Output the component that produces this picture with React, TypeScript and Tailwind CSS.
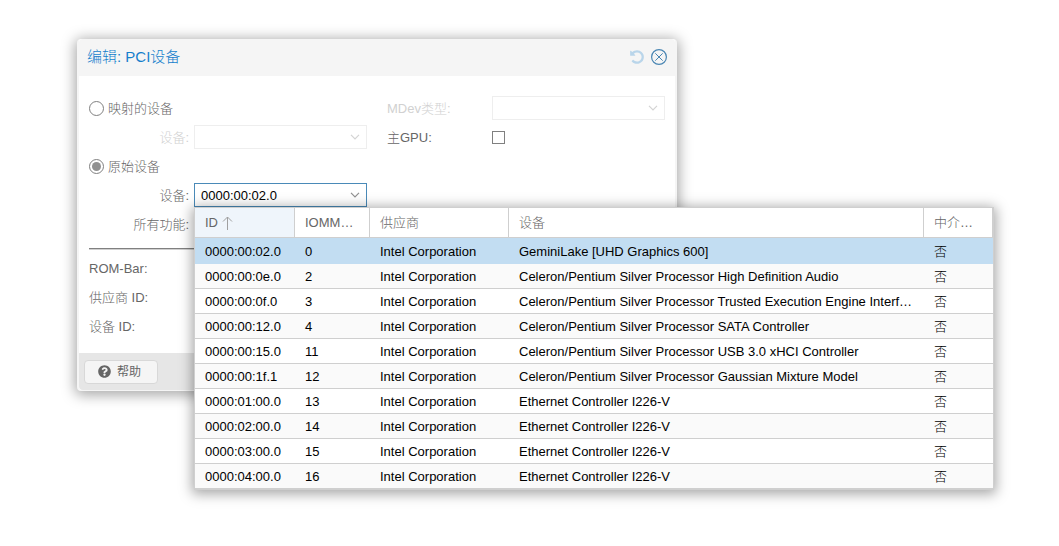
import { ReactNode, useState } from "react";
import { FaQuestionCircle } from "react-icons/fa";

const devices = [
    { id: "0000:00:02.0", group: 0, vendor: "Intel Corporation", name: "GeminiLake [UHD Graphics 600]" },
    { id: "0000:00:0e.0", group: 2, vendor: "Intel Corporation", name: "Celeron/Pentium Silver Processor High Definition Audio" },
    { id: "0000:00:0f.0", group: 3, vendor: "Intel Corporation", name: "Celeron/Pentium Silver Processor Trusted Execution Engine Interface" },
    { id: "0000:00:12.0", group: 4, vendor: "Intel Corporation", name: "Celeron/Pentium Silver Processor SATA Controller" },
    { id: "0000:00:15.0", group: 11, vendor: "Intel Corporation", name: "Celeron/Pentium Silver Processor USB 3.0 xHCI Controller" },
    { id: "0000:00:1f.1", group: 12, vendor: "Intel Corporation", name: "Celeron/Pentium Silver Processor Gaussian Mixture Model" },
    { id: "0000:01:00.0", group: 13, vendor: "Intel Corporation", name: "Ethernet Controller I226-V" },
    { id: "0000:02:00.0", group: 14, vendor: "Intel Corporation", name: "Ethernet Controller I226-V" },
    { id: "0000:03:00.0", group: 15, vendor: "Intel Corporation", name: "Ethernet Controller I226-V" },
    { id: "0000:04:00.0", group: 16, vendor: "Intel Corporation", name: "Ethernet Controller I226-V" },
];

const UndoIcon = () => (
    <svg viewBox="0 0 1792 1792" className="h-4 w-4" fill="currentColor">
        <path d="M1664 896q0 156-61 298t-164 245-245 164-298 61q-172 0-327-72.5t-264-204.5q-7-10-6.5-22.5t8.5-20.5l137-138q10-9 25-9 16 2 23 12 73 95 179 147t225 52q104 0 198.5-40.5t163.5-109.5 109.5-163.5 40.5-198.5-40.5-198.5-109.5-163.5-163.5-109.5-198.5-40.5q-98 0-188 35.5t-160 101.5l137 138q31 30 14 69-17 40-59 40h-448q-26 0-45-19t-19-45v-448q0-42 40-59 39-17 69 14l130 129q107-101 244.5-156.5t284.5-55.5q156 0 298 61t245 164 164 245 61 298z" />
    </svg>
);

const CloseIcon = () => (
    <svg viewBox="0 0 16 16" className="h-4 w-4" fill="none" stroke="#4a86b3">
        <circle cx="8" cy="8" r="7.4" strokeWidth="1.2" />
        <path d="M4.3 4.3 11.7 11.7M11.7 4.3 4.3 11.7" />
    </svg>
);

const Chevron = ({ className }: { className: string }) => (
    <svg viewBox="0 0 10 6" className={`pointer-events-none absolute right-[7px] top-[9px] h-[6px] w-[10px] ${className}`} fill="none" stroke="currentColor" strokeWidth="1.2">
        <path d="M1 0.8 5 4.8 9 0.8" />
    </svg>
);

const Row = ({ label, htmlFor, className = "", children }: { label: string, htmlFor: string, className?: string, children?: ReactNode }) => (
    <div className="flex h-6 items-center gap-[5px]">
        <label htmlFor={htmlFor} className={`w-[100px] shrink-0 pt-0.5 ${className}`}>{label}</label>
        {children}
    </div>
);

const DisabledSelect = ({ id }: { id: string }) => (
    <div className="relative h-6 flex-1">
        <select id={id} disabled className="h-6 w-full appearance-none border border-[#eeeeee] bg-white" />
        <Chevron className="text-[#d4d4d4]" />
    </div>
);

const checkboxStyle = "h-[13px] w-[13px] appearance-none border border-[#808080] bg-white checked:bg-[#919191]";
const radioStyle = "h-[15px] w-[15px] appearance-none rounded-full border border-[#808080] bg-white p-[2px] checked:bg-[#919191] checked:bg-clip-content";

const DeviceTable = ({ selected, onSelect }: { selected: string, onSelect: (id: string) => void }) => {
    const head = "h-[30px] truncate border-r border-b border-[#cfcfcf] px-[10px] text-left font-light";

    return (
        <div className="absolute left-0 top-full z-10 w-[800px] border border-[#cfcfcf] bg-white shadow-[0_2px_12px_2px_rgba(0,0,0,0.35)]">
            <table className="w-full table-fixed border-separate border-spacing-0">
                <colgroup>
                    <col className="w-[100px]" />
                    <col className="w-[75px]" />
                    <col className="w-[139px]" />
                    <col />
                    <col className="w-[69px]" />
                </colgroup>
                <thead className="text-[#666666]">
                    <tr>
                        <th className={`${head} bg-[#eff5fb]`}>
                            <span className="flex items-center gap-1">
                                ID
                                <svg viewBox="0 0 11 14" className="h-[14px] w-[11px]" fill="none" stroke="#a0a0a0">
                                    <path d="M5.5 14V1M1 5.5 5.5 1 10 5.5" />
                                </svg>
                            </span>
                        </th>
                        <th className={head}>IOMMU组</th>
                        <th className={head}>供应商</th>
                        <th className={head}>设备</th>
                        <th className={head}>中介设备</th>
                    </tr>
                </thead>
                <tbody className="text-black">
                    {devices.map((d) => {
                        const active = d.id === selected;
                        const cell = active
                            ? "h-[26px] truncate border-y border-[#c2ddf2] px-[10px] pt-0.5"
                            : "h-[25px] truncate border-b border-[#cfcfcf] px-[10px] pt-0.5";
                        return (
                            <tr key={d.id} onClick={() => onSelect(d.id)} className={active ? "bg-[#c2ddf2]" : "cursor-pointer even:bg-[#fafafa]"}>
                                <td className={cell}>{d.id}</td>
                                <td className={cell}>{d.group}</td>
                                <td className={cell}>{d.vendor}</td>
                                <td className={cell}>{d.name}</td>
                                <td className={cell}>否</td>
                            </tr>
                        );
                    })}
                </tbody>
            </table>
        </div>
    );
};

const App = () => {
    const [mode, setMode] = useState("raw");
    const [device, setDevice] = useState("0000:00:02.0");

    return (
        <main className="min-h-screen bg-white px-[77px] pt-[39px] font-['Liberation_Sans','Noto_Sans_CJK_SC',sans-serif] text-[13px] leading-4 font-light text-[#666666]">
            <form className="w-full max-w-[600px] rounded border-x-2 border-b border-[#f5f5f5] bg-white shadow-[0_2px_14px_2px_rgba(0,0,0,0.35)]" onSubmit={(e) => e.preventDefault()}>
                <header className="flex h-[37px] items-center gap-[6px] rounded-t bg-[#f5f5f5] px-2 pb-0.5">
                    <h1 className="flex-1 text-[15px] leading-5 text-[#157fcc]">编辑: PCI设备</h1>
                    <button type="button" aria-label="重置" className="text-[#b9d5ea]"><UndoIcon /></button>
                    <button type="button" aria-label="关闭"><CloseIcon /></button>
                </header>

                <div className="px-[10px] pt-5 pb-[15px]">
                    <div className="grid grid-cols-2 gap-x-5">
                        <div className="flex flex-col gap-[5px]">
                            <label className="flex h-6 items-center gap-1">
                                <input type="radio" name="mode" checked={mode === "mapped"} onChange={() => setMode("mapped")} className={radioStyle} />
                                <span className="pt-0.5">映射的设备</span>
                            </label>
                            <Row label="设备:" htmlFor="mapped" className="text-right text-[#d1d1d1]">
                                <DisabledSelect id="mapped" />
                            </Row>
                            <label className="flex h-6 items-center gap-1">
                                <input type="radio" name="mode" checked={mode === "raw"} onChange={() => setMode("raw")} className={radioStyle} />
                                <span className="pt-0.5">原始设备</span>
                            </label>
                            <Row label="设备:" htmlFor="device" className="text-right">
                                <div className="relative h-6 flex-1">
                                    <input id="device" type="text" value={device} onChange={(e) => setDevice(e.target.value)} className="h-6 w-full border border-[#4a8ab8] bg-white px-[6px] text-black outline-none" />
                                    <Chevron className="text-[#919191]" />
                                    <DeviceTable selected={device} onSelect={setDevice} />
                                </div>
                            </Row>
                            <Row label="所有功能:" htmlFor="functions" className="text-right">
                                <input id="functions" type="checkbox" className={checkboxStyle} />
                            </Row>
                        </div>

                        <div className="flex flex-col gap-[5px]">
                            <Row label="MDev类型:" htmlFor="mdev" className="text-[#d1d1d1]">
                                <DisabledSelect id="mdev" />
                            </Row>
                            <Row label="主GPU:" htmlFor="gpu">
                                <input id="gpu" type="checkbox" className={checkboxStyle} />
                            </Row>
                        </div>
                    </div>

                    <hr className="mt-3 mb-[6px] border-t border-b border-t-[#808080] border-b-[#d0d0d0]" />

                    <div className="flex flex-col gap-[5px]">
                        <Row label="ROM-Bar:" htmlFor="rombar">
                            <input id="rombar" type="checkbox" defaultChecked className={checkboxStyle} />
                        </Row>
                        <Row label="供应商 ID:" htmlFor="vendor">
                            <input id="vendor" type="text" className="h-6 w-[173px] border border-[#cfcfcf]" />
                        </Row>
                        <Row label="设备 ID:" htmlFor="deviceid">
                            <input id="deviceid" type="text" className="h-6 w-[173px] border border-[#cfcfcf]" />
                        </Row>
                    </div>
                </div>

                <footer className="flex h-[37px] items-center rounded-b bg-[#e6e6e6] px-[5px]">
                    <button type="button" className="flex h-6 items-center gap-[6px] rounded-sm border border-[#d8d8d8] bg-[#f5f5f5] pr-4 pl-[13px] text-xs font-normal">
                        <FaQuestionCircle className="h-[13px] w-[13px]" />
                        帮助
                    </button>
                </footer>
            </form>
        </main>
    );
}
export default App;
